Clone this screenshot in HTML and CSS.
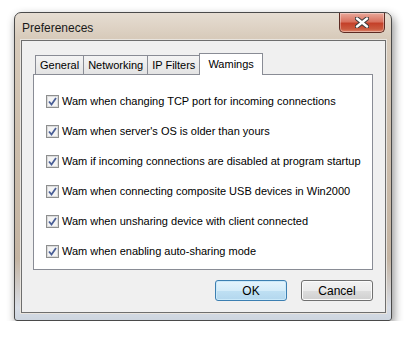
FILE: index.html
```html
<!DOCTYPE html>
<html lang="en">
<head>
    <meta charset="UTF-8">
    <title>Prefereneces</title>
    <link rel="stylesheet" href="styles.css">
</head>
<body>
    <div class="window">
        <div class="titlebar">
            <span class="title">Prefereneces</span>
            <button class="close-btn" aria-label="Close">
                <svg width="14" height="11" viewBox="0 0 14 11">
                    <path d="M2 1.5 L12 9.5 M12 1.5 L2 9.5" stroke="#3a3a3a" stroke-width="4.4" stroke-linecap="round"/>
                    <path d="M2 1.5 L12 9.5 M12 1.5 L2 9.5" stroke="#ffffff" stroke-width="2.4" stroke-linecap="round"/>
                </svg>
            </button>
        </div>

        <div class="client">
            <div class="tabs">
                <div class="tab">General</div>
                <div class="tab">Networking</div>
                <div class="tab">IP Filters</div>
                <div class="tab active">Wamings</div>
            </div>

            <div class="panel">
                <label class="option"><span class="check"></span>Wam when changing TCP port for incoming connections</label>
                <label class="option"><span class="check"></span>Wam when server's OS is older than yours</label>
                <label class="option"><span class="check"></span>Wam if incoming connections are disabled at program startup</label>
                <label class="option"><span class="check"></span>Wam when connecting composite USB devices in Win2000</label>
                <label class="option"><span class="check"></span>Wam when unsharing device with client connected</label>
                <label class="option"><span class="check"></span>Wam when enabling auto-sharing mode</label>
            </div>

            <div class="buttons">
                <button class="btn default">OK</button>
                <button class="btn">Cancel</button>
            </div>
        </div>
    </div>
</body>
</html>
```

FILE: styles.css
```css
body {
    margin: 0;
    padding: 12px 0 0 14px;
    background: #ffffff;
    font-family: 'Liberation Sans', Arial, sans-serif;
    font-size: 11px;
    color: #000;
}
.window {
    width: 378px;
    height: 309px;
    box-sizing: border-box;
    display: flex;
    flex-direction: column;
    border: 1px solid #4a4a4a;
    border-radius: 7px 7px 3px 3px;
    background: linear-gradient(to bottom, #e6ddd2 0%, #d8cbbb 8%, #cdbeac 40%, #c4b4a2 80%, #d8dde6 96%, #cdd5df 100%);
    box-shadow: 2px 4px 10px rgba(0,0,0,0.45);
}
.titlebar {
    height: 27px;
    display: flex;
    align-items: flex-start;
}
.title {
    margin: 8px 0 0 7px;
    font-size: 12px;
    color: #1a1a1a;
}
.close-btn {
    margin: 0 6px 0 auto;
    width: 46px;
    height: 20px;
    border: 1px solid #5c2a22;
    border-top: none;
    border-radius: 0 0 5px 5px;
    background: linear-gradient(to bottom, #e9a99b 0%, #d9725f 45%, #c4412a 55%, #cb5a3f 85%, #e08a70 100%);
    box-shadow: inset 0 0 0 1px rgba(255,255,255,0.35);
    display: flex;
    align-items: center;
    justify-content: center;
    padding: 0;
}
.client {
    flex: 1;
    margin: 0 5px 7px 6px;
    background: #f0f0f0;
    border: 1px solid #6e6e6e;
    box-shadow: 0 0 0 1px #e8e4de;
    padding: 12px 12px 0 11px;
    display: flex;
    flex-direction: column;
}
.tabs {
    display: flex;
    align-items: flex-end;
    padding-left: 2px;
    height: 21px;
    position: relative;
    z-index: 1;
}
.tab {
    height: 19px;
    box-sizing: border-box;
    padding: 2px 4px 0;
    border: 1px solid #898c95;
    border-bottom: none;
    margin-right: -1px;
    background: linear-gradient(to bottom, #f4f4f4, #e3e3e3);
    line-height: 15px;
}
.tab.active {
    height: 22px;
    margin-bottom: -1px;
    padding: 3px 8px 0;
    background: #ffffff;
}
.panel {
    height: 196px;
    box-sizing: border-box;
    background: #ffffff;
    border: 1px solid #898c95;
    padding: 19px 0 0 12px;
    display: flex;
    flex-direction: column;
    gap: 16px;
}
.option {
    display: flex;
    align-items: center;
    height: 14px;
    gap: 3px;
    white-space: nowrap;
}
.check {
    flex-shrink: 0;
    width: 13px;
    height: 13px;
    box-sizing: border-box;
    border: 1px solid #8e8f8f;
    background: #f4f4f4 url("data:image/svg+xml,%3Csvg xmlns='http://www.w3.org/2000/svg' width='11' height='11'%3E%3Cpath d='M2 5.5 L4.5 8.5 L9 2' fill='none' stroke='%234a5f97' stroke-width='1.8'/%3E%3C/svg%3E") no-repeat center;
    box-shadow: inset 0 0 0 1px #dcdcdc;
}
.buttons {
    display: flex;
    justify-content: flex-end;
    gap: 14px;
    margin-top: 10px;
}
.btn {
    width: 72px;
    height: 21px;
    border: 1px solid #707070;
    border-radius: 3px;
    background: linear-gradient(to bottom, #f2f2f2 0%, #ebebeb 50%, #dddddd 51%, #cfcfcf 100%);
    box-shadow: inset 0 0 0 1px #fbfbfb;
    font-family: 'Liberation Sans', Arial, sans-serif;
    font-size: 12px;
    color: #000;
    padding: 0;
}
.btn.default {
    border-color: #3c7fb1;
    background: linear-gradient(to bottom, #e5f4fc 0%, #d4ecf9 50%, #bfe0f3 51%, #b3d7ee 100%);
    box-shadow: inset 0 0 0 1px #cbe9f9;
}
```
